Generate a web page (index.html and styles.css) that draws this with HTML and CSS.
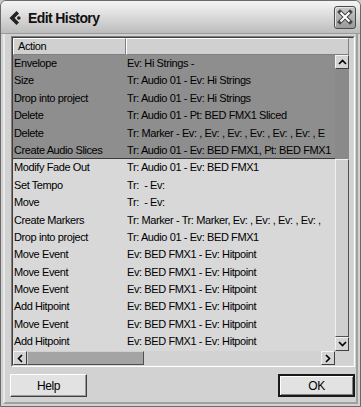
FILE: index.html
```html
<!DOCTYPE html>
<html>
<head>
<meta charset="utf-8">
<link rel="stylesheet" href="styles.css">
</head>
<body>
<div class="window">
  <div class="titlebar">
    <svg class="logo" width="14" height="16" viewBox="0 0 14 16">
      <path d="M8.5 1 L1.5 8 L8.5 15 L11 12.5 L6.5 8 L11 3.5 Z" fill="#222"/>
      <circle cx="10.8" cy="8" r="1.8" fill="#222"/>
    </svg>
    <span class="title">Edit History</span>
    <div class="close">
      <svg width="16" height="16" viewBox="0 0 16 16">
        <path d="M3 3 L13 13 M13 3 L3 13" stroke="#444" stroke-width="4" stroke-linecap="square"/>
        <path d="M3.5 3.5 L12.5 12.5 M12.5 3.5 L3.5 12.5" stroke="#fff" stroke-width="2"/>
      </svg>
    </div>
  </div>
  <div class="content">
    <div class="listbox">
      <div class="grid">
        <div class="header">
          <div class="hcell c1">Action</div>
          <div class="hcell c2"></div>
        </div>
        <div class="rows">
          <div class="row sel"><span class="c1">Envelope</span><span class="c2">Ev: Hi Strings -</span></div>
          <div class="row sel"><span class="c1">Size</span><span class="c2">Tr: Audio 01 - Ev: Hi Strings</span></div>
          <div class="row sel"><span class="c1">Drop into project</span><span class="c2">Tr: Audio 01 - Ev: Hi Strings</span></div>
          <div class="row sel"><span class="c1">Delete</span><span class="c2">Tr: Audio 01 - Pt: BED FMX1 Sliced</span></div>
          <div class="row sel"><span class="c1">Delete</span><span class="c2">Tr: Marker - Ev: , Ev: , Ev: , Ev: , Ev: , Ev: , E</span></div>
          <div class="row sel last"><span class="c1">Create Audio Slices</span><span class="c2">Tr: Audio 01 - Ev: BED FMX1, Pt: BED FMX1</span></div>
          <div class="row"><span class="c1">Modify Fade Out</span><span class="c2">Tr: Audio 01 - Ev: BED FMX1</span></div>
          <div class="row"><span class="c1">Set Tempo</span><span class="c2">Tr:&nbsp; - Ev:</span></div>
          <div class="row"><span class="c1">Move</span><span class="c2">Tr:&nbsp; - Ev:</span></div>
          <div class="row"><span class="c1">Create Markers</span><span class="c2">Tr: Marker - Tr: Marker, Ev: , Ev: , Ev: , Ev: ,</span></div>
          <div class="row"><span class="c1">Drop into project</span><span class="c2">Tr: Audio 01 - Ev: BED FMX1</span></div>
          <div class="row"><span class="c1">Move Event</span><span class="c2">Ev: BED FMX1 - Ev: Hitpoint</span></div>
          <div class="row"><span class="c1">Move Event</span><span class="c2">Ev: BED FMX1 - Ev: Hitpoint</span></div>
          <div class="row"><span class="c1">Move Event</span><span class="c2">Ev: BED FMX1 - Ev: Hitpoint</span></div>
          <div class="row"><span class="c1">Add Hitpoint</span><span class="c2">Ev: BED FMX1 - Ev: Hitpoint</span></div>
          <div class="row"><span class="c1">Move Event</span><span class="c2">Ev: BED FMX1 - Ev: Hitpoint</span></div>
          <div class="row"><span class="c1">Add Hitpoint</span><span class="c2">Ev: BED FMX1 - Ev: Hitpoint</span></div>
        </div>
        <div class="vscroll">
          <div class="arrow">
            <svg width="9" height="6" viewBox="0 0 9 6"><path d="M1 5 L4.5 1.5 L8 5" stroke="#000" stroke-width="1.6" fill="none"/></svg>
          </div>
          <div class="vtrack-dark"></div>
          <div class="vthumb"></div>
          <div class="arrow">
            <svg width="9" height="6" viewBox="0 0 9 6"><path d="M1 1 L4.5 4.5 L8 1" stroke="#000" stroke-width="1.6" fill="none"/></svg>
          </div>
        </div>
        <div class="hscroll">
          <div class="arrow">
            <svg width="6" height="9" viewBox="0 0 6 9"><path d="M5 1 L1.5 4.5 L5 8" stroke="#000" stroke-width="1.6" fill="none"/></svg>
          </div>
          <div class="hthumb"></div>
          <div class="htrack"></div>
          <div class="arrow">
            <svg width="6" height="9" viewBox="0 0 6 9"><path d="M1 1 L4.5 4.5 L1 8" stroke="#000" stroke-width="1.6" fill="none"/></svg>
          </div>
        </div>
        <div class="corner"></div>
      </div>
    </div>
    <div class="buttons">
      <div class="btn">Help</div>
      <div class="btn default">OK</div>
    </div>
  </div>
</div>
</body>
</html>
```
FILE: styles.css
```css
* { box-sizing: border-box; }
html, body { margin: 0; padding: 0; background: #c8c8c8; }
body { width: 361px; height: 407px; overflow: hidden; font-family: "Liberation Sans", Arial, sans-serif; }

.window {
  width: 361px; height: 407px;
  display: flex; flex-direction: column;
  background: #d2d2d2;
  border: 1px solid #6a6a6a;
  border-radius: 6px 6px 0 0;
  overflow: hidden;
}

.titlebar {
  height: 33px;
  display: flex; align-items: center;
  padding: 0 3px 0 7px;
  background: linear-gradient(#f4f4f4 0%, #e2e2e2 35%, #cbcbcb 75%, #bcbcbc 100%);
  border-bottom: 1px solid #9a9a9a;
  flex: none;
}
.logo { flex: none; margin-top: 1px; }
.title {
  margin-left: 6px;
  font-weight: bold; font-size: 14px; letter-spacing: -0.6px; color: #111;
  flex: 1;
  margin-top: 1px;
}
.close {
  width: 22px; height: 23px;
  border: 1px solid #4a4a4a; border-radius: 3px;
  background: linear-gradient(#c8c8c8, #9a9a9a);
  display: flex; align-items: center; justify-content: center;
  box-shadow: inset 1px 1px 0 #e6e6e6;
  margin-right: 1px;
}

.content {
  flex: 1;
  border-left: 2px solid #e8e8e8;
  border-right: 2px solid #a0a0a0;
  border-bottom: 2px solid #a0a0a0;
  margin: 0 2px 2px;
  padding: 2px 3px 0 6px;
  display: flex; flex-direction: column;
}

.listbox {
  border: 1px solid;
  border-color: #808080 #ffffff #ffffff #808080;
  width: 344px;
}
.grid {
  border: 1px solid;
  border-color: #404040 #d8d8d8 #d8d8d8 #404040;
  display: grid;
  grid-template-columns: 322px 14px;
  grid-template-rows: 17px 296px 14px;
  font-size: 11px; letter-spacing: -0.4px; color: #000;
}

.header { grid-column: 1 / 3; display: flex; }
.hcell {
  height: 17px; line-height: 15px;
  background: #d0d0d0;
  border: 1px solid; border-color: #ffffff #808080 #808080 #ffffff;
  padding-left: 4px;
}
.hcell.c1 { width: 113px; }
.hcell.c2 { flex: 1; }

.rows { background: #d8d8d8; overflow: hidden; }
.row {
  height: 17.4px; line-height: 17.4px;
  display: flex; white-space: nowrap; overflow: hidden;
}
.row.sel { background: #8e8e8e; }
.row.last { border-bottom: 1px solid #3a3a3a; line-height: 16.4px; }
.row .c1 { width: 113px; flex: none; padding-left: 1px; }
.row .c2 { flex: none; padding-left: 1px; }

.vscroll { display: flex; flex-direction: column; background: #d0d0d0; }
.arrow {
  width: 14px; height: 14px; flex: none;
  background: #d4d4d4;
  border: 1px solid; border-color: #f4f4f4 #404040 #404040 #f4f4f4;
  display: flex; align-items: center; justify-content: center;
}
.vtrack-dark { height: 90px; background: #8a8a8a; flex: none; }
.vthumb {
  flex: 1;
  background: #cfcfcf;
  border: 1px solid; border-color: #f0f0f0 #505050 #505050 #f0f0f0;
}

.hscroll { display: flex; }
.hthumb {
  width: 117px; flex: none;
  background: #a4a4a4;
  border: 1px solid; border-color: #d0d0d0 #505050 #505050 #d0d0d0;
}
.htrack { flex: 1; background: #d2d2d2; }
.corner { background: #d2d2d2; }

.buttons {
  display: flex; justify-content: space-between;
  margin-top: 7px;
  width: 345px;
  margin-left: -1px;
}
.btn {
  width: 77px; height: 23px;
  display: flex; align-items: center; justify-content: center;
  background: #e2e2e2;
  border: 1px solid; border-color: #ffffff #404040 #404040 #ffffff;
  box-shadow: inset -1px -1px 0 #9a9a9a;
  font-size: 12px; letter-spacing: -0.4px; color: #000;
}
.btn.default {
  border: 2px solid #1a1a1a;
  box-shadow: inset 1px 1px 0 #fff, inset -1px -1px 0 #808080;
}
```
